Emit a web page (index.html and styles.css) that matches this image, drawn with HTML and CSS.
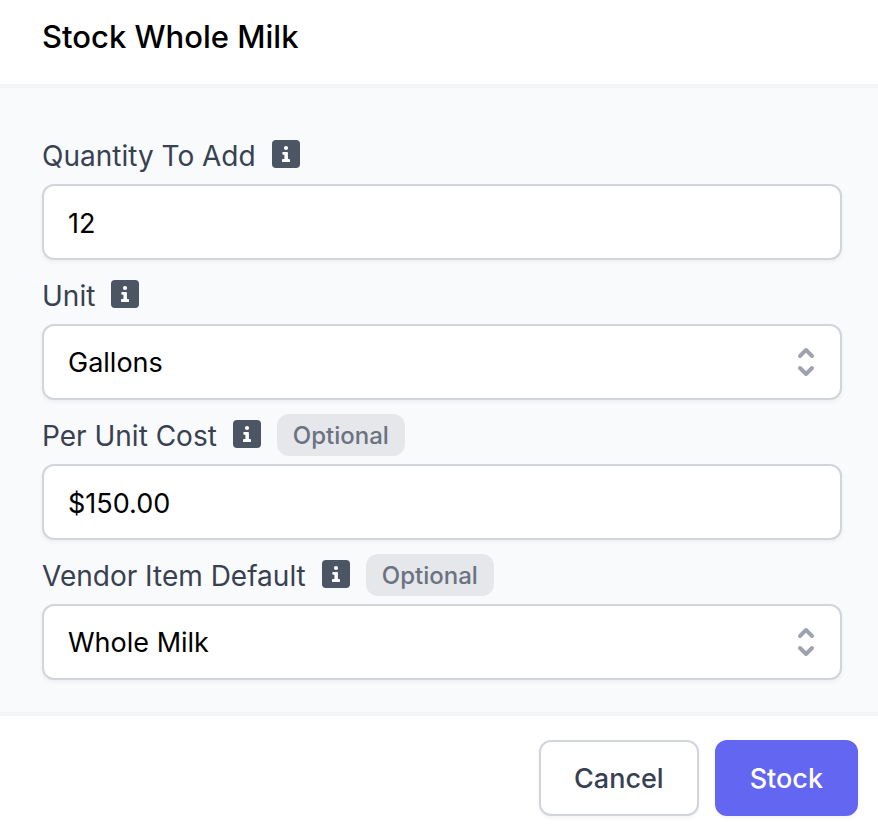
FILE: index.html
```html
<!DOCTYPE html>
<html lang="en">
	<head>
		<meta charset="utf-8">
		<meta name="viewport" content="width=device-width, initial-scale=1">
		<title>Stock Whole Milk</title>
		<link rel="stylesheet" href="styles.css">
	</head>
	<body>

		<svg class="hideMe" width="0" height="0" aria-hidden="true">
			<defs>
				<symbol id="info" viewBox="0 0 28 28">
					<rect width="28" height="28" rx="4" fill="#4b5563" />
					<circle cx="14" cy="8" r="2.1" fill="#fff" />
					<path fill="#fff" d="M11.2 11.9h3.8a.9.9 0 01.9.9v6.3h1.2a.9.9 0 01.9.9v1.2a.9.9 0 01-.9.9h-6.2a.9.9 0 01-.9-.9V20a.9.9 0 01.9-.9h1.5v-4.4h-1.2a.9.9 0 01-.9-.9v-1a.9.9 0 01.9-.9z" />
				</symbol>
				<symbol id="updown" viewBox="0 0 20 20">
					<path fill="#9ca3af" fill-rule="evenodd" d="M10 3a1 1 0 01.707.293l3 3a1 1 0 01-1.414 1.414L10 5.414 7.707 7.707a1 1 0 01-1.414-1.414l3-3A1 1 0 0110 3zm-3.707 9.293a1 1 0 011.414 0L10 14.586l2.293-2.293a1 1 0 011.414 1.414l-3 3a1 1 0 01-1.414 0l-3-3a1 1 0 010-1.414z" />
				</symbol>
			</defs>
		</svg>

		<form class="modal">
			<header class="modal-header">
				<h1>Stock Whole Milk</h1>
			</header>

			<div class="modal-body">
				<div class="field">
					<div class="field-head">
						<label for="quantity">Quantity To Add</label>
						<svg class="info"><use href="#info"></use></svg>
					</div>
					<input class="control" type="text" id="quantity" value="12">
				</div>

				<div class="field">
					<div class="field-head">
						<label for="unit">Unit</label>
						<svg class="info"><use href="#info"></use></svg>
					</div>
					<div class="select">
						<select class="control" id="unit">
							<option>Gallons</option>
						</select>
						<svg class="arrows"><use href="#updown"></use></svg>
					</div>
				</div>

				<div class="field">
					<div class="field-head">
						<label for="cost">Per Unit Cost</label>
						<svg class="info"><use href="#info"></use></svg>
						<span class="optional">Optional</span>
					</div>
					<input class="control" type="text" id="cost" value="$150.00">
				</div>

				<div class="field">
					<div class="field-head">
						<label for="vendor">Vendor Item Default</label>
						<svg class="info"><use href="#info"></use></svg>
						<span class="optional">Optional</span>
					</div>
					<div class="select">
						<select class="control" id="vendor">
							<option>Whole Milk</option>
						</select>
						<svg class="arrows"><use href="#updown"></use></svg>
					</div>
				</div>
			</div>

			<footer class="modal-footer">
				<button type="button" class="btn">Cancel</button>
				<button type="submit" class="btn btn-primary">Stock</button>
			</footer>
		</form>

	</body>
</html>
```
FILE: styles.css
```css
* { box-sizing:border-box; }

body {
	margin:0;
	background:#fff;
	color:#000;
	font-family:Inter, "Liberation Sans", sans-serif;
	font-size:27px;
	line-height:40px;
}

.hideMe { visibility:hidden; position:absolute; }

.modal-header {
	padding:17px 42px 27px;
	border-bottom:4px solid #f3f4f6;
}
.modal-header h1 {
	margin:0;
	font-size:31px;
	font-weight:500;
}

.modal-body {
	display:flex;
	flex-direction:column;
	gap:14px;
	padding:46px 36px 32px 42px;
	background:#f9fafb;
}

.field {
	display:flex;
	flex-direction:column;
	gap:8px;
}
.field-head {
	display:flex;
	align-items:center;
	gap:16px;
	height:42px;
}
.field-head label {
	padding-top:2px;
	color:#374151;
	font-size:28px;
	font-weight:400;
}
.info {
	width:28px;
	height:28px;
	margin-bottom:2px;
}
.optional {
	padding:2px 16px 0;
	border-radius:12px;
	background:#e5e7eb;
	color:#6b7280;
	font-size:24px;
	font-weight:500;
}

.control {
	display:block;
	width:100%;
	height:76px;
	margin:0;
	padding:2px 24px 0;
	border:2px solid #d1d5db;
	border-radius:12px;
	background:#fff;
	box-shadow:0 2px 4px rgba(0,0,0,0.05);
	color:#000;
	font:inherit;
}
.select { position:relative; }
.select .control {
	padding-right:64px;
	appearance:none;
	-webkit-appearance:none;
}
.arrows {
	position:absolute;
	top:18px;
	right:16px;
	width:40px;
	height:40px;
	pointer-events:none;
}

.modal-footer {
	display:flex;
	justify-content:flex-end;
	gap:16px;
	padding:24px 20px 10px;
	border-top:4px solid #f3f4f6;
}
.btn {
	padding:17px 33px 15px;
	border:2px solid #d1d5db;
	border-radius:12px;
	background:#fff;
	box-shadow:0 2px 4px rgba(0,0,0,0.05);
	color:#374151;
	font:inherit;
	font-weight:500;
}
.btn-primary {
	border-color:#6366f1;
	background:#6366f1;
	color:#fff;
}
```
